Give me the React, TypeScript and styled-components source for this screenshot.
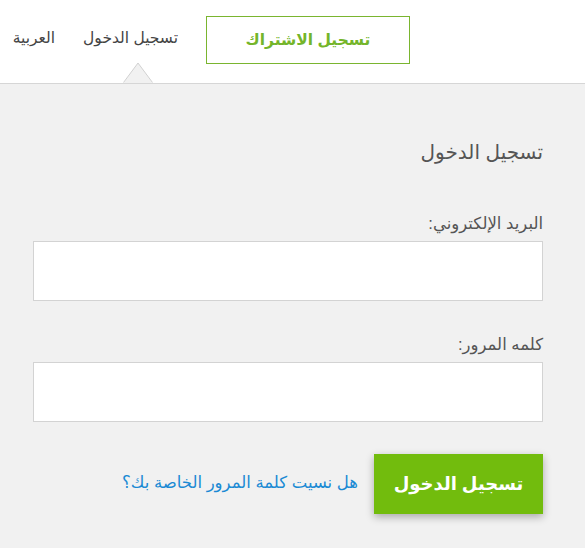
import React from "react";
import styled, { createGlobalStyle } from "styled-components";

const Global = createGlobalStyle`
  html, body { margin: 0; padding: 0; background: #f1f1f1; }
  body { font-family: "Liberation Sans", Arial, "DejaVu Sans", sans-serif; }
  * { box-sizing: border-box; }
`;

const Page = styled.div`
  direction: rtl;
  width: 585px;
  min-height: 548px;
  background: #f1f1f1;
`;

const Header = styled.header`
  position: relative;
  height: 84px;
  background: #fff;
  border-bottom: 1px solid #d6d6d6;
  display: flex;
  align-items: center;
  padding-right: 175px;
  gap: 28px;
`;

const RegisterBox = styled.a`
  display: flex;
  align-items: center;
  justify-content: center;
  width: 204px;
  height: 48px;
  margin-top: -4px;
  border: 1px solid #7ab52f;
  color: #74b52a;
  font-weight: bold;
  font-size: 15.5px;
  text-decoration: none;
`;

const NavLink = styled.a`
  position: relative;
  color: #444;
  font-size: 15.5px;
  margin-top: -8px;
  text-decoration: none;
  white-space: nowrap;
`;

const Caret = styled.svg`
  position: absolute;
  left: 40px;
  top: 33px;
  display: block;
`;

const Content = styled.main`
  padding: 56px 42px 0 33px;
  display: flex;
  flex-direction: column;
`;

const Title = styled.h1`
  margin: 0 0 50px;
  font-size: 20px;
  font-weight: normal;
  color: #555;
`;

const Label = styled.label`
  display: block;
  font-size: 16.5px;
  color: #555;
  margin-bottom: 8px;
`;

const Input = styled.input`
  display: block;
  width: 510px;
  height: 60px;
  border: 1px solid #d3d3d3;
  background: #fff;
  margin-bottom: 34px;
  outline: none;
`;

const Actions = styled.div`
  display: flex;
  align-items: center;
  gap: 16px;
  margin-top: -2px;
`;

const SubmitButton = styled.button`
  width: 169px;
  height: 60px;
  border: none;
  background: #72bc0d;
  color: #fff;
  font-family: inherit;
  font-size: 18px;
  font-weight: bold;
  box-shadow: 0 3px 8px rgba(0, 0, 0, 0.3);
  cursor: pointer;
`;

const Forgot = styled.a`
  color: #1a8ad4;
  font-size: 16.5px;
  text-decoration: none;
  margin-top: -4px;
`;

export default function App() {
  return (
    <>
      <Global />
      <Page>
        <Header>
          <RegisterBox href="#">تسجيل الاشتراك</RegisterBox>
          <NavLink href="#">
            تسجيل الدخول
            <Caret width="30" height="21" viewBox="0 0 30 21">
              <polygon points="0.5,21 15,1 29.5,21" fill="#f1f1f1" />
              <polyline points="0.5,20.5 15,1 29.5,20.5" fill="none" stroke="#d0d0d0" strokeWidth="1" />
            </Caret>
          </NavLink>
          <NavLink href="#">العربية</NavLink>
        </Header>
        <Content>
          <Title>تسجيل الدخول</Title>
          <Label>البريد الإلكتروني:</Label>
          <Input type="email" />
          <Label>كلمه المرور:</Label>
          <Input type="password" />
          <Actions>
            <SubmitButton>تسجيل الدخول</SubmitButton>
            <Forgot href="#">هل نسيت كلمة المرور الخاصة بك؟</Forgot>
          </Actions>
        </Content>
      </Page>
    </>
  );
}
